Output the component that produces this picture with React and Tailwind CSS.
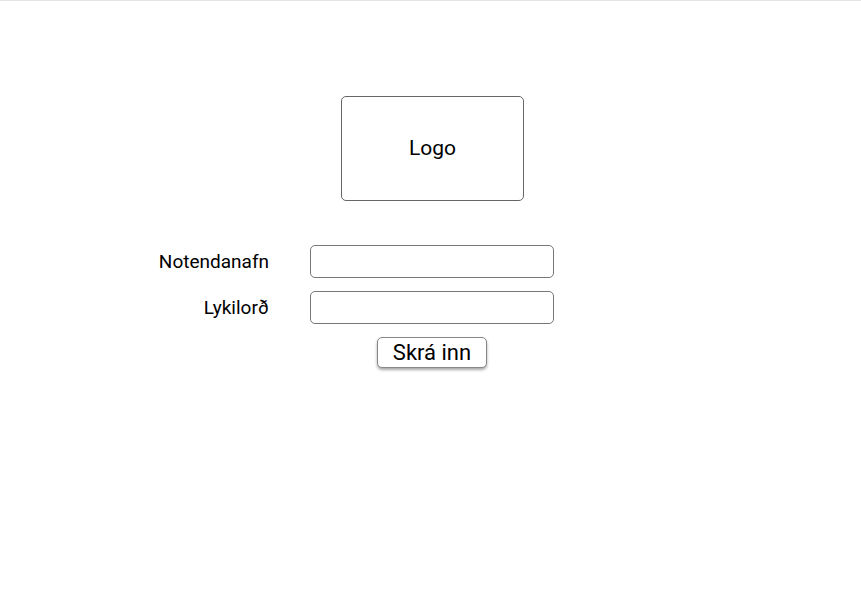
export default function App() {
  return (
    <div className="min-h-[615px] w-[861px] bg-white border-t border-[#e3e3e3]" style={{ fontFamily: "Roboto, 'Liberation Sans', sans-serif" }}>
      <div className="ml-[341px] mt-[95px] flex h-[105px] w-[183px] items-center justify-center rounded-[5px] border border-[#666] text-[21px] text-black">
        Logo
      </div>
      <div className="mt-[44px] flex flex-col">
        <div className="flex items-center">
          <div className="w-[270px] pr-[1px] pt-[2px] text-right text-[19px] text-black">Notendanafn</div>
          <input className="ml-[40px] h-[33px] w-[244px] rounded-[5px] border border-[#777] outline-none" />
        </div>
        <div className="mt-[13px] flex items-center">
          <div className="w-[270px] pr-[1px] pt-[2px] text-right text-[19px] text-black">Lykilorð</div>
          <input type="password" className="ml-[40px] h-[33px] w-[244px] rounded-[5px] border border-[#777] outline-none" />
        </div>
        <div className="mt-[13px] ml-[377px]">
          <button className="h-[31px] w-[110px] rounded-[5px] border border-[#888] bg-white text-[22px] leading-none text-black shadow-[0_2px_3px_rgba(0,0,0,0.35)]">
            Skrá inn
          </button>
        </div>
      </div>
    </div>
  );
}
